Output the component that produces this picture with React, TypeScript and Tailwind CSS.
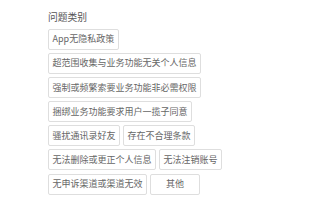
const rows: string[][] = [
  ['App无隐私政策'],
  ['超范围收集与业务功能无关个人信息'],
  ['强制或频繁索要业务功能非必需权限'],
  ['捆绑业务功能要求用户一揽子同意'],
  ['骚扰通讯录好友', '存在不合理条款'],
  ['无法删除或更正个人信息', '无法注销账号'],
  ['无申诉渠道或渠道无效', '其他'],
]

function Tag({ label }: { label: string }) {
  const wide = label === '其他'
  return (
    <div
      className={`h-[21px] flex items-center justify-center border border-[#dedede] rounded-[2px] bg-white text-[9px] text-[#666] whitespace-nowrap ${
        wide ? 'w-[50px]' : 'px-[3.5px]'
      }`}
    >
      {label}
    </div>
  )
}

export default function App() {
  return (
    <div
      className="w-[309px] h-[210px] bg-white pl-[48px] pt-[11px] overflow-hidden"
      style={{ fontFamily: '"Noto Sans CJK SC", "Noto Sans", sans-serif' }}
    >
      <p className="text-[9.75px] leading-[12px] text-[#555] mb-[5.5px]">问题类别</p>
      <div className="flex flex-col items-start gap-[3.2px]">
        {rows.map((row, i) => (
          <div key={i} className="flex gap-[3px]">
            {row.map((label) => (
              <Tag key={label} label={label} />
            ))}
          </div>
        ))}
      </div>
    </div>
  )
}
